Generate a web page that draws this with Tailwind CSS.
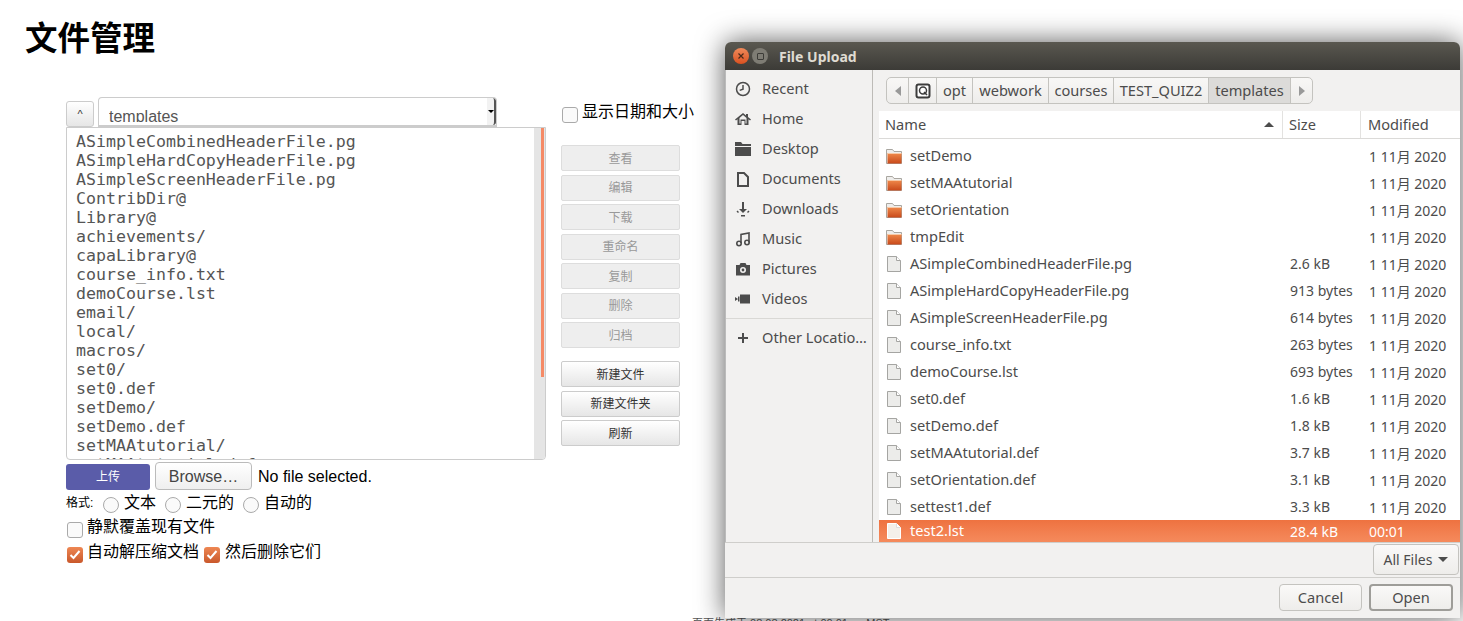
<!DOCTYPE html>
<html lang="zh">
<head>
<meta charset="UTF-8" />
<title>文件管理</title>
<script src="https://cdn.jsdelivr.net/npm/@tailwindcss/browser@4"></script>
</head>
<body class="bg-white text-black font-['Liberation_Sans','Noto_Sans_CJK_SC',sans-serif]">
<svg class="absolute h-0 w-0">
  <defs>
    <linearGradient id="orange" x1="0" y1="0" x2="0" y2="1"><stop offset="0" stop-color="#f08a4b"/><stop offset="1" stop-color="#c8491a"/></linearGradient>
  </defs>
  <symbol id="folder" viewBox="0 0 16 16">
    <path d="M.5 1.5h6l1.5 2h7.5v12H.5z" fill="#efeeec" stroke="#a9a6a0"/>
    <rect x="1.5" y="5" width="14" height="10.5" fill="url(#orange)"/>
    <rect x="1.5" y="5" width="14" height="1" fill="#f7c9a6"/>
  </symbol>
  <symbol id="doc" viewBox="0 0 16 16">
    <path d="M1.5.5h9l4 4v11h-13z" fill="#ececea" stroke="#a5a5a2"/>
    <path d="M10.5.5v4h4" fill="#fff" stroke="#a5a5a2"/>
  </symbol>
  <symbol id="doc-sel" viewBox="0 0 16 16">
    <path d="M1.5.5h9l4 4v11h-13z" fill="#f4efe9" stroke="#fff"/>
    <path d="M10.5.5v4h4" fill="#fff" stroke="#ddd"/>
  </symbol>
</svg>

<div class="relative h-[621px] w-[1463px] overflow-hidden">
  <h1 class="pl-[25px] pt-[20px] text-[32.5px] leading-[38px] font-bold">文件管理</h1>

  <!-- file manager -->
  <div class="mt-[39px] ml-[66px] flex">
    <div class="w-[480px]">
      <div class="flex items-end gap-[4px]">
        <button class="h-[26px] w-[28px] rounded-[3px] border border-[#ccc] bg-gradient-to-b from-white to-[#e6e6e6] text-[11px] leading-[20px] text-[#333]">^</button>
        <div class="relative h-[30px] w-[399px] overflow-hidden rounded-t-[4px] border border-b-[2px] border-[#ccc] bg-white pl-[10px] text-[16px] text-[#555]">
          <div class="h-[24px] overflow-hidden leading-[37px]">templates</div>
          <span class="absolute top-0 right-0 flex h-full w-[9px] items-center justify-center rounded-r-[3px] border-r-[2px] border-[#555] bg-[#f2f2f2]">
            <span class="h-0 w-0 border-x-[3px] border-t-[3px] border-x-transparent border-t-black"></span>
          </span>
        </div>
      </div>
      <div class="relative h-[333px] overflow-hidden rounded-b-[4px] border border-[#ccc] bg-white pt-[4px] pl-[9px] font-['DejaVu_Sans_Mono',monospace] text-[16.6px] leading-[19px] text-[#555]">
        <div>ASimpleCombinedHeaderFile.pg</div>
        <div>ASimpleHardCopyHeaderFile.pg</div>
        <div>ASimpleScreenHeaderFile.pg</div>
        <div>ContribDir@</div>
        <div>Library@</div>
        <div>achievements/</div>
        <div>capaLibrary@</div>
        <div>course_info.txt</div>
        <div>demoCourse.lst</div>
        <div>email/</div>
        <div>local/</div>
        <div>macros/</div>
        <div>set0/</div>
        <div>set0.def</div>
        <div>setDemo/</div>
        <div>setDemo.def</div>
        <div>setMAAtutorial/</div>
        <div>setMAAtutorial.def</div>
        <div class="absolute top-0 right-0 h-full w-[11px] bg-[#e5e5e5]">
          <div class="ml-[7px] h-[249px] w-[3px] bg-[#f58a66]"></div>
        </div>
      </div>
      <div class="mt-[2px] flex items-center gap-[5px]">
        <button class="mt-[2px] h-[26px] w-[84px] rounded-[3px] bg-[#5a5ca9] text-[12px] text-white">上传</button>
        <button class="h-[28px] w-[97px] rounded-[4px] border border-[#bbb] bg-gradient-to-b from-white to-[#efefef] pt-[1px] text-[16px] text-[#444]">Browse…</button>
        <span class="ml-[1px] pt-[1px] text-[16px]">No file selected.</span>
      </div>
      <div class="mt-[1px] flex h-[24px] items-center text-[16px]">
        <span class="mr-[10px] w-[27px] shrink-0 text-[12px] whitespace-nowrap">格式:</span>
        <span class="mt-[4px] h-[16px] w-[16px] rounded-full border border-[#aaa] bg-[#fafafa]"></span>
        <span class="mr-[9px] ml-[5px]">文本</span>
        <span class="mt-[4px] h-[16px] w-[16px] rounded-full border border-[#aaa] bg-[#fafafa]"></span>
        <span class="mr-[9px] ml-[5px]">二元的</span>
        <span class="mt-[4px] h-[16px] w-[16px] rounded-full border border-[#aaa] bg-[#fafafa]"></span>
        <span class="ml-[5px]">自动的</span>
      </div>
      <div class="flex h-[24px] items-center text-[16px]">
        <span class="mt-[5px] ml-[1px] h-[16px] w-[16px] rounded-[3px] border border-[#aaa] bg-[#fafafa]"></span>
        <span class="ml-[4px]">静默覆盖现有文件</span>
      </div>
      <div class="mt-[1px] flex h-[24px] items-center text-[16px]">
        <span class="mt-[6px] ml-[1px] flex h-[16px] w-[16px] items-center justify-center rounded-[3px] bg-gradient-to-b from-[#ee8753] to-[#c9582b]">
          <svg width="12" height="12" viewBox="0 0 12 12" fill="none" stroke="#fff" stroke-width="2"><path d="M1.5 6l3 3 6-7"/></svg>
        </span>
        <span class="ml-[4px]">自动解压缩文档</span>
        <span class="mt-[6px] ml-[5px] flex h-[16px] w-[16px] items-center justify-center rounded-[3px] bg-gradient-to-b from-[#ee8753] to-[#c9582b]">
          <svg width="12" height="12" viewBox="0 0 12 12" fill="none" stroke="#fff" stroke-width="2"><path d="M1.5 6l3 3 6-7"/></svg>
        </span>
        <span class="ml-[5px]">然后删除它们</span>
      </div>
    </div>

    <div class="ml-[15px] w-[119px]">
      <div class="flex h-[48px] items-start pt-[7px] text-[16px]">
        <span class="mt-[3px] ml-[1px] h-[16px] w-[16px] shrink-0 rounded-[3px] border border-[#aaa] bg-[#fafafa]"></span>
        <span class="ml-[4px] leading-[16px] whitespace-nowrap">显示日期和大小</span>
      </div>
      <div class="flex flex-col gap-[3.5px] text-center text-[12px] text-[#999]">
        <button class="h-[26px] rounded-[2px] border border-[#ddd] bg-[#eee] pt-[1px]">查看</button>
        <button class="h-[26px] rounded-[2px] border border-[#ddd] bg-[#eee] pt-[1px]">编辑</button>
        <button class="h-[26px] rounded-[2px] border border-[#ddd] bg-[#eee] pt-[1px]">下载</button>
        <button class="h-[26px] rounded-[2px] border border-[#ddd] bg-[#eee] pt-[1px]">重命名</button>
        <button class="h-[26px] rounded-[2px] border border-[#ddd] bg-[#eee] pt-[1px]">复制</button>
        <button class="h-[26px] rounded-[2px] border border-[#ddd] bg-[#eee] pt-[1px]">删除</button>
        <button class="h-[26px] rounded-[2px] border border-[#ddd] bg-[#eee] pt-[1px]">归档</button>
      </div>
      <div class="mt-[13px] flex flex-col gap-[3.5px] text-center text-[12px] text-[#333]">
        <button class="h-[26px] rounded-[2px] border border-[#ccc] bg-gradient-to-b from-white to-[#e6e6e6] pt-[1px]">新建文件</button>
        <button class="h-[26px] rounded-[2px] border border-[#ccc] bg-gradient-to-b from-white to-[#e6e6e6] pt-[1px]">新建文件夹</button>
        <button class="h-[26px] rounded-[2px] border border-[#ccc] bg-gradient-to-b from-white to-[#e6e6e6] pt-[1px]">刷新</button>
      </div>
    </div>
  </div>

  <!-- footer, almost entirely under the dialog -->
  <div class="absolute top-[616px] left-[692px] text-[11px] leading-[14px] text-[#555]">页面生成于 08:08:2021 at 00:01am MST</div>

  <!-- desktop file dialog on top of the page -->
  <div class="absolute top-[42px] left-[725px] flex h-[576px] w-[735px] flex-col overflow-hidden rounded-t-[6px] bg-[#f2f1f0] font-['Noto_Sans','Noto_Sans_CJK_SC',sans-serif] text-[14.6px] text-[#4c4c4c] shadow-[0_0_28px_rgba(0,0,0,0.65)]">
    <div class="flex h-[28px] shrink-0 items-center bg-gradient-to-b from-[#5a5850] to-[#3c3b37] pl-[8px]">
      <span class="flex h-[16px] w-[16px] items-center justify-center rounded-full bg-gradient-to-b from-[#f08a5a] to-[#d9501e]">
        <svg width="8" height="8" viewBox="0 0 8 8" stroke="#4a2a1a" stroke-width="1.2"><path d="M1.5 1.5l5 5M6.5 1.5l-5 5"/></svg>
      </span>
      <span class="ml-[3px] flex h-[16px] w-[16px] items-center justify-center rounded-full bg-[#7e7c74]">
        <span class="h-[7px] w-[7px] rounded-[1px] border border-[#3c3b37]"></span>
      </span>
      <span class="ml-[11px] text-[14px] font-bold text-[#dfdbd2]">File Upload</span>
    </div>

    <div class="flex h-[472px] shrink-0 overflow-hidden border-l border-[#bbb]">
      <!-- places -->
      <div class="w-[147px] shrink-0 border-r border-[#bdbbb7] pt-[4px] whitespace-nowrap">
        <div class="flex h-[30px] items-center gap-[11px] pl-[9px]">
          <svg class="shrink-0" width="16" height="16" viewBox="0 0 16 16" fill="none" stroke="#4c4c4c" stroke-width="1.5"><circle cx="8" cy="8" r="6.5"/><path d="M8 4v4.2l-3.3 1.2"/></svg>Recent</div>
        <div class="flex h-[30px] items-center gap-[11px] pl-[9px]">
          <svg class="shrink-0" width="16" height="16" viewBox="0 0 16 16" fill="#4c4c4c"><path d="M8 2L0 8.5l1 1 1.5-1.2V14h4v-4h3v4h4V8.3L15 9.5l1-1-3-2.4V3h-2v1.5zM8 4l3.5 3v5.5h-1v-4h-5v4h-1V7z"/></svg>Home</div>
        <div class="flex h-[30px] items-center gap-[11px] pl-[9px]">
          <svg class="shrink-0" width="16" height="16" viewBox="0 0 16 16" fill="#4c4c4c"><path d="M0 1h6l1.5 2H16v2H0zM0 6h16v9H0z"/></svg>Desktop</div>
        <div class="flex h-[30px] items-center gap-[11px] pl-[9px]">
          <svg class="shrink-0" width="16" height="16" viewBox="0 0 16 16" fill="none" stroke="#4c4c4c" stroke-width="2"><path d="M3 2h6l4 4v9H3z"/></svg>Documents</div>
        <div class="flex h-[30px] items-center gap-[11px] pl-[9px]">
          <svg class="shrink-0" width="16" height="16" viewBox="0 0 16 16" fill="#4c4c4c"><path d="M7 1h2v7h3l-4 4-4-4h3zM6 14h4v1.5H6z"/><path d="M2.5 9.5l1.5 1.5-1 1-1.5-1.5zM13.5 9.5l1 1-1.5 1.5-1-1z" /></svg>Downloads</div>
        <div class="flex h-[30px] items-center gap-[11px] pl-[9px]">
          <svg class="shrink-0" width="16" height="16" viewBox="0 0 16 16" fill="none" stroke="#4c4c4c" stroke-width="1.6"><circle cx="4" cy="12.5" r="2.2"/><circle cx="12" cy="11.5" r="2.2"/><path d="M6 12V3.5l8-1.5v9.5"/></svg>Music</div>
        <div class="flex h-[30px] items-center gap-[11px] pl-[9px]">
          <svg class="shrink-0" width="16" height="16" viewBox="0 0 16 16"><path d="M1 4h3.5l1-2h5l1 2H15v10.5H1z" fill="#4c4c4c"/><circle cx="8" cy="9" r="3" fill="#f2f1f0"/><circle cx="8" cy="9" r="1.4" fill="#4c4c4c"/></svg>Pictures</div>
        <div class="flex h-[30px] items-center gap-[11px] pl-[9px]">
          <svg class="shrink-0" width="16" height="16" viewBox="0 0 16 16" fill="#4c4c4c"><path d="M5 3.5h10v9H5zM0 6l3 2-3 2zM3 5.5h1.5v5H3z"/></svg>Videos</div>
        <div class="mt-[4px] h-px bg-[#d9d8d5]"></div>
        <div class="mt-[4px] flex h-[30px] items-center gap-[11px] pl-[9px]">
          <svg class="shrink-0" width="16" height="16" viewBox="0 0 16 16" fill="#4c4c4c"><path d="M7 3h2v4h4v2H9v4H7V9H3V7h4z"/></svg>Other Locatio…</div>
      </div>

      <!-- files -->
      <div class="flex min-w-0 flex-1 flex-col pl-[6px]">
        <div class="mt-[7px] ml-[7px] flex h-[27px] w-[427px] shrink-0 items-center overflow-hidden rounded-[5px] border border-[#c4c3bf] bg-gradient-to-b from-[#f8f7f6] to-[#eeedeb]">
          <span class="flex h-full w-[22px] items-center justify-center border-r border-[#c4c3bf]"><span class="h-0 w-0 border-y-[5px] border-r-[6px] border-y-transparent border-r-[#999]"></span></span>
          <span class="flex h-full w-[28px] items-center justify-center border-r border-[#c4c3bf]">
            <svg width="16" height="16" viewBox="0 0 16 16" fill="none" stroke="#3c3c3c"><rect x="1.5" y="1.5" width="13" height="13" rx="2" fill="#fff" stroke-width="2"/><circle cx="8" cy="7.5" r="3.5" stroke-width="1.5"/><path d="M9 9l3 3" stroke-width="1.6"/></svg>
          </span>
          <span class="flex h-full w-[36px] items-center justify-center border-r border-[#c4c3bf]">opt</span>
          <span class="flex h-full w-[76px] items-center justify-center border-r border-[#c4c3bf]">webwork</span>
          <span class="flex h-full w-[65px] items-center justify-center border-r border-[#c4c3bf]">courses</span>
          <span class="flex h-full w-[95px] items-center justify-center border-r border-[#c4c3bf]">TEST_QUIZ2</span>
          <span class="flex h-full w-[82px] items-center justify-center border-r border-[#c4c3bf] bg-[#dcdbd9]">templates</span>
          <span class="flex h-full flex-1 items-center justify-center"><span class="h-0 w-0 border-y-[5px] border-l-[6px] border-y-transparent border-l-[#999]"></span></span>
        </div>
        <div class="mt-[7px] flex min-h-0 flex-1 flex-col bg-white">
          <div class="flex h-[28px] shrink-0 items-center border-b border-[#dbdad8]">
            <span class="relative h-full w-[403px] pl-[6px] leading-[27px]">Name<span class="absolute top-[11px] right-[8px] h-0 w-0 border-x-[5px] border-b-[5px] border-x-transparent border-b-[#4c4c4c]"></span></span>
            <span class="h-full w-[78px] border-l border-[#e3e2e0] pl-[6px] leading-[27px]">Size</span>
            <span class="h-full flex-1 border-l border-[#e3e2e0] pl-[7px] leading-[27px]">Modified</span>
          </div>
          <div class="h-[3px] shrink-0"></div>
          <div class="flex h-[27px] shrink-0 items-center"><svg class="ml-[7px]" width="16" height="16"><use href="#folder"/></svg><span class="ml-[8px] w-[380px]">setDemo</span><span class="w-[79px]"></span><span class="mt-[2px] text-[14px]">1 11月 2020</span></div>
          <div class="flex h-[27px] shrink-0 items-center"><svg class="ml-[7px]" width="16" height="16"><use href="#folder"/></svg><span class="ml-[8px] w-[380px]">setMAAtutorial</span><span class="w-[79px]"></span><span class="mt-[2px] text-[14px]">1 11月 2020</span></div>
          <div class="flex h-[27px] shrink-0 items-center"><svg class="ml-[7px]" width="16" height="16"><use href="#folder"/></svg><span class="ml-[8px] w-[380px]">setOrientation</span><span class="w-[79px]"></span><span class="mt-[2px] text-[14px]">1 11月 2020</span></div>
          <div class="flex h-[27px] shrink-0 items-center"><svg class="ml-[7px]" width="16" height="16"><use href="#folder"/></svg><span class="ml-[8px] w-[380px]">tmpEdit</span><span class="w-[79px]"></span><span class="mt-[2px] text-[14px]">1 11月 2020</span></div>
          <div class="flex h-[27px] shrink-0 items-center"><svg class="ml-[7px]" width="16" height="16"><use href="#doc"/></svg><span class="ml-[8px] w-[380px]">ASimpleCombinedHeaderFile.pg</span><span class="w-[79px] text-[14px]">2.6 kB</span><span class="mt-[2px] text-[14px]">1 11月 2020</span></div>
          <div class="flex h-[27px] shrink-0 items-center"><svg class="ml-[7px]" width="16" height="16"><use href="#doc"/></svg><span class="ml-[8px] w-[380px]">ASimpleHardCopyHeaderFile.pg</span><span class="w-[79px] text-[14px]">913 bytes</span><span class="mt-[2px] text-[14px]">1 11月 2020</span></div>
          <div class="flex h-[27px] shrink-0 items-center"><svg class="ml-[7px]" width="16" height="16"><use href="#doc"/></svg><span class="ml-[8px] w-[380px]">ASimpleScreenHeaderFile.pg</span><span class="w-[79px] text-[14px]">614 bytes</span><span class="mt-[2px] text-[14px]">1 11月 2020</span></div>
          <div class="flex h-[27px] shrink-0 items-center"><svg class="ml-[7px]" width="16" height="16"><use href="#doc"/></svg><span class="ml-[8px] w-[380px]">course_info.txt</span><span class="w-[79px] text-[14px]">263 bytes</span><span class="mt-[2px] text-[14px]">1 11月 2020</span></div>
          <div class="flex h-[27px] shrink-0 items-center"><svg class="ml-[7px]" width="16" height="16"><use href="#doc"/></svg><span class="ml-[8px] w-[380px]">demoCourse.lst</span><span class="w-[79px] text-[14px]">693 bytes</span><span class="mt-[2px] text-[14px]">1 11月 2020</span></div>
          <div class="flex h-[27px] shrink-0 items-center"><svg class="ml-[7px]" width="16" height="16"><use href="#doc"/></svg><span class="ml-[8px] w-[380px]">set0.def</span><span class="w-[79px] text-[14px]">1.6 kB</span><span class="mt-[2px] text-[14px]">1 11月 2020</span></div>
          <div class="flex h-[27px] shrink-0 items-center"><svg class="ml-[7px]" width="16" height="16"><use href="#doc"/></svg><span class="ml-[8px] w-[380px]">setDemo.def</span><span class="w-[79px] text-[14px]">1.8 kB</span><span class="mt-[2px] text-[14px]">1 11月 2020</span></div>
          <div class="flex h-[27px] shrink-0 items-center"><svg class="ml-[7px]" width="16" height="16"><use href="#doc"/></svg><span class="ml-[8px] w-[380px]">setMAAtutorial.def</span><span class="w-[79px] text-[14px]">3.7 kB</span><span class="mt-[2px] text-[14px]">1 11月 2020</span></div>
          <div class="flex h-[27px] shrink-0 items-center"><svg class="ml-[7px]" width="16" height="16"><use href="#doc"/></svg><span class="ml-[8px] w-[380px]">setOrientation.def</span><span class="w-[79px] text-[14px]">3.1 kB</span><span class="mt-[2px] text-[14px]">1 11月 2020</span></div>
          <div class="flex h-[27px] shrink-0 items-center"><svg class="ml-[7px]" width="16" height="16"><use href="#doc"/></svg><span class="ml-[8px] w-[380px]">settest1.def</span><span class="w-[79px] text-[14px]">3.3 kB</span><span class="mt-[2px] text-[14px]">1 11月 2020</span></div>
          <div class="flex h-[22px] shrink-0 items-center bg-gradient-to-b from-[#ee7240] to-[#f58a5c] text-white"><svg class="ml-[7px]" width="16" height="16"><use href="#doc-sel"/></svg><span class="ml-[8px] w-[380px]">test2.lst</span><span class="w-[79px] text-[14px]">28.4 kB</span><span class="text-[14px]">00:01</span></div>
        </div>
      </div>
    </div>

    <div class="flex h-[35px] shrink-0 items-start justify-end border-t border-[#cfcecb] pt-[1px] pr-[1px]">
      <button class="flex h-[31px] w-[86px] items-center justify-center gap-[6px] rounded-[4px] border border-[#c4c3bf] bg-gradient-to-b from-[#faf9f8] to-[#eeedeb] text-[14px]">All Files<span class="h-0 w-0 border-x-[5px] border-t-[5px] border-x-transparent border-t-[#4c4c4c]"></span></button>
    </div>
    <div class="flex flex-1 items-start justify-end gap-[7px] border-t border-[#cfcecb] pt-[6px] pr-[7px]">
      <button class="h-[27px] w-[83px] rounded-[4px] border border-[#c4c3bf] bg-gradient-to-b from-[#faf9f8] to-[#eeedeb]">Cancel</button>
      <button class="h-[27px] w-[84px] rounded-[4px] border-[2px] border-[#9e9d99] bg-gradient-to-b from-[#faf9f8] to-[#eeedeb]">Open</button>
    </div>
  </div>
</div>
</body>
</html>
